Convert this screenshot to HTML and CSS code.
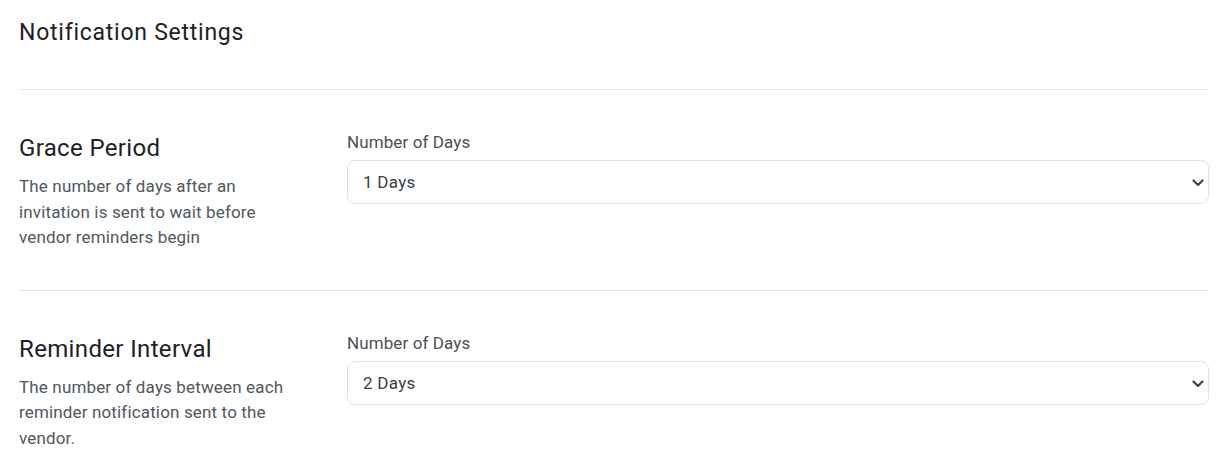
FILE: index.html
```html
<!DOCTYPE html>
<html lang="en">
<head>
<meta charset="utf-8">
<title>Notification Settings</title>
<link rel="stylesheet" href="styles.css">
</head>
<body>
<div class="page">
  <header class="page-header">
    <h1 class="page-title">Notification Settings</h1>
  </header>

  <section class="setting">
    <div class="setting-info">
      <h2 class="setting-title">Grace Period</h2>
      <p class="setting-desc">The number of days after an invitation is sent to wait before vendor reminders begin</p>
    </div>
    <div class="setting-field">
      <label class="field-label" for="grace">Number of Days</label>
      <div class="select-wrap">
        <select id="grace" class="select">
          <option>1 Days</option>
          <option>2 Days</option>
          <option>3 Days</option>
        </select>
        <svg class="chevron" width="12" height="8" viewBox="0 0 12 8" aria-hidden="true"><path d="M1.5 1.5 L6 6 L10.5 1.5" fill="none" stroke="#3f4448" stroke-width="2.2" stroke-linecap="round" stroke-linejoin="round"/></svg>
      </div>
    </div>
  </section>

  <section class="setting">
    <div class="setting-info">
      <h2 class="setting-title">Reminder Interval</h2>
      <p class="setting-desc">The number of days between each reminder notification sent to the vendor.</p>
    </div>
    <div class="setting-field">
      <label class="field-label" for="interval">Number of Days</label>
      <div class="select-wrap">
        <select id="interval" class="select">
          <option>1 Days</option>
          <option selected>2 Days</option>
          <option>3 Days</option>
        </select>
        <svg class="chevron" width="12" height="8" viewBox="0 0 12 8" aria-hidden="true"><path d="M1.5 1.5 L6 6 L10.5 1.5" fill="none" stroke="#3f4448" stroke-width="2.2" stroke-linecap="round" stroke-linejoin="round"/></svg>
      </div>
    </div>
  </section>
</div>
</body>
</html>
```

FILE: styles.css
```css
* { box-sizing: border-box; }

html, body {
  margin: 0;
  padding: 0;
  background: #ffffff;
}

body {
  font-family: Roboto, "Liberation Sans", Arial, sans-serif;
  color: #212529;
}

.page {
  padding: 0 20px 0 19px;
}

.page-header {
  padding-top: 18px;
  height: 89px;
}

.page-title {
  margin: 0;
  font-size: 23px;
  font-weight: 400;
  line-height: 30px;
  letter-spacing: 0.75px;
  color: #1d2125;
}

.setting {
  border-top: 1px solid #e6e6e6;
  display: grid;
  grid-template-columns: 304px 1fr;
  column-gap: 24px;
  align-items: start;
  padding: 40px 0 39px;
}

.setting-info {
  padding-top: 4px;
}

.setting-title {
  margin: 0;
  font-size: 24px;
  font-weight: 400;
  line-height: 29px;
  letter-spacing: 0.35px;
  color: #1d2125;
}

.setting-desc {
  max-width: 280px;
  margin: 11px 0 0;
  font-size: 17px;
  line-height: 25.6px;
  letter-spacing: 0.15px;
  color: #51575d;
}

.field-label {
  display: block;
  font-size: 17px;
  line-height: 24px;
  letter-spacing: 0.1px;
  color: #4a5056;
  margin-bottom: 6px;
}

.select-wrap {
  position: relative;
}

.select {
  display: block;
  width: 100%;
  height: 44px;
  padding: 0 40px 0 15px;
  font-family: inherit;
  font-size: 17px;
  letter-spacing: 0.3px;
  color: #3a3f44;
  background: #ffffff;
  border: 1px solid #e3e3e3;
  border-radius: 8px;
  appearance: none;
  -webkit-appearance: none;
  outline: none;
}

.chevron {
  position: absolute;
  right: 5px;
  top: 19px;
  pointer-events: none;
}
```
